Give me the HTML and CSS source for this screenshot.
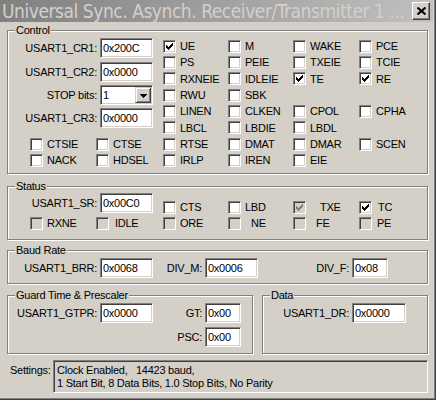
FILE: index.html
```html
<!DOCTYPE html>
<html>
<head>
<meta charset="utf-8">
<link rel="stylesheet" href="styles.css">
</head>
<body>
<div class="window">
  <div class="titlebar">
    <span class="title">Universal Sync. Asynch. Receiver/Transmitter 1 ...</span>
    <span class="close"><svg viewBox="0 0 9 8" width="9" height="8"><path d="M0.5 0.5L8.5 7.5M8.5 0.5L0.5 7.5" stroke="#000" stroke-width="2"/></svg></span>
  </div>
  <div class="client">
    <div class="group control">
      <span class="gt">Control</span>
      <div class="grid cgrid">
        <div class="fields">
          <div class="field"><span class="lab">USART1_CR1:</span><span class="edit">0x200C</span></div>
          <div class="field f2"><span class="lab">USART1_CR2:</span><span class="edit">0x0000</span></div>
          <div class="field f3"><span class="lab">STOP bits:</span><span class="combo"><span class="ctext">1</span><span class="drop"><svg viewBox="0 0 7 4" width="7" height="4"><path d="M0 0h7v1H0zM1 1h5v1H1zM2 2h3v1H2zM3 3h1v1H3z"/></svg></span></span></div>
          <div class="field f4"><span class="lab">USART1_CR3:</span><span class="edit">0x0000</span></div>
        </div>
        <label class="cb"><span class="box"><svg viewBox="1 1 11 11" width="11" height="11"><path d="M3 5h1v3H3zM4 6h1v3H4zM5 7h1v3H5zM6 6h1v3H6zM7 5h1v3H7zM8 4h1v3H8zM9 3h1v3H9z"/></svg></span>UE</label>
        <label class="cb"><span class="box"></span>M</label>
        <label class="cb"><span class="box"></span>WAKE</label>
        <label class="cb"><span class="box"></span>PCE</label>

        <label class="cb"><span class="box"></span>PS</label>
        <label class="cb"><span class="box"></span>PEIE</label>
        <label class="cb"><span class="box"></span>TXEIE</label>
        <label class="cb"><span class="box"></span>TCIE</label>

        <label class="cb"><span class="box"></span>RXNEIE</label>
        <label class="cb"><span class="box"></span>IDLEIE</label>
        <label class="cb"><span class="box"><svg viewBox="1 1 11 11" width="11" height="11"><path d="M3 5h1v3H3zM4 6h1v3H4zM5 7h1v3H5zM6 6h1v3H6zM7 5h1v3H7zM8 4h1v3H8zM9 3h1v3H9z"/></svg></span>TE</label>
        <label class="cb"><span class="box"><svg viewBox="1 1 11 11" width="11" height="11"><path d="M3 5h1v3H3zM4 6h1v3H4zM5 7h1v3H5zM6 6h1v3H6zM7 5h1v3H7zM8 4h1v3H8zM9 3h1v3H9z"/></svg></span>RE</label>

        <label class="cb"><span class="box"></span>RWU</label>
        <label class="cb"><span class="box"></span>SBK</label>
        <span></span><span></span>

        <label class="cb"><span class="box"></span>LINEN</label>
        <label class="cb"><span class="box"></span>CLKEN</label>
        <label class="cb"><span class="box"></span>CPOL</label>
        <label class="cb"><span class="box"></span>CPHA</label>

        <label class="cb"><span class="box"></span>LBCL</label>
        <label class="cb"><span class="box"></span>LBDIE</label>
        <label class="cb"><span class="box"></span>LBDL</label>
        <span></span>

        <span></span>
        <label class="cb"><span class="box"></span>CTSIE</label>
        <label class="cb"><span class="box"></span>CTSE</label>
        <label class="cb"><span class="box"></span>RTSE</label>
        <label class="cb"><span class="box"></span>DMAT</label>
        <label class="cb"><span class="box"></span>DMAR</label>
        <label class="cb"><span class="box"></span>SCEN</label>

        <span></span>
        <label class="cb"><span class="box"></span>NACK</label>
        <label class="cb"><span class="box"></span>HDSEL</label>
        <label class="cb"><span class="box"></span>IRLP</label>
        <label class="cb"><span class="box"></span>IREN</label>
        <label class="cb"><span class="box"></span>EIE</label>
      </div>
    </div>

    <div class="group status">
      <span class="gt">Status</span>
      <div class="grid sgrid">
        <div class="fields"><div class="field"><span class="lab">USART1_SR:</span><span class="edit">0x00C0</span></div></div>
        <label class="cb top"><span class="box"></span>CTS</label>
        <label class="cb top"><span class="box"></span>LBD</label>
        <label class="cb top"><span class="box dis"><svg viewBox="1 1 11 11" width="11" height="11"><path d="M3 5h1v3H3zM4 6h1v3H4zM5 7h1v3H5zM6 6h1v3H6zM7 5h1v3H7zM8 4h1v3H8zM9 3h1v3H9z"/></svg></span><span class="i10">TXE</span></label>
        <label class="cb top"><span class="box"><svg viewBox="1 1 11 11" width="11" height="11"><path d="M3 5h1v3H3zM4 6h1v3H4zM5 7h1v3H5zM6 6h1v3H6zM7 5h1v3H7zM8 4h1v3H8zM9 3h1v3H9z"/></svg></span><span class="i2">TC</span></label>

        <span></span>
        <label class="cb"><span class="box dis"></span>RXNE</label>
        <label class="cb"><span class="box dis"></span><span class="i2">IDLE</span></label>
        <label class="cb"><span class="box dis"></span>ORE</label>
        <label class="cb"><span class="box dis"></span><span class="i6">NE</span></label>
        <label class="cb"><span class="box dis"></span><span class="i6">FE</span></label>
        <label class="cb"><span class="box dis"></span><span class="i1">PE</span></label>
      </div>
    </div>

    <div class="group baud">
      <span class="gt">Baud Rate</span>
      <span class="lab w92">USART1_BRR:</span><span class="edit">0x0068</span>
      <span class="lab w52">DIV_M:</span><span class="edit">0x0006</span>
      <span class="lab w94">DIV_F:</span><span class="edit w36">0x08</span>
    </div>

    <div class="row2">
      <div class="group guard">
        <span class="gt">Guard Time &amp; Prescaler</span>
        <span class="lab w92">USART1_GTPR:</span><span class="edit">0x0000</span>
        <span class="lab w52">GT:</span><span class="edit w36">0x00</span>
        <span class="lab w52 c3">PSC:</span><span class="edit w36 c4">0x00</span>
      </div>
      <div class="group data">
        <span class="gt">Data</span>
        <span class="lab w89">USART1_DR:</span><span class="edit w54">0x0000</span>
      </div>
    </div>

    <div class="settings">
      <span class="slab">Settings:</span>
      <div class="sbox">Clock Enabled,   14423 baud,
1 Start Bit, 8 Data Bits, 1.0 Stop Bits, No Parity</div>
    </div>
  </div>
</div>
</body>
</html>
```
FILE: styles.css
```css
* { box-sizing: border-box; }
html, body { margin: 0; padding: 0; }
body {
  width: 436px;
  height: 400px;
  background: #d4d0c8;
  font-family: "Liberation Sans", Arial, sans-serif;
  font-size: 11px;
  letter-spacing: -0.25px;
  color: #000;
  overflow: hidden;
}
.window {
  width: 436px;
  height: 400px;
  border-right: 1px solid #404040;
  border-bottom: 1px solid #404040;
  box-shadow: inset -1px -1px 0 #808080;
  display: flex;
  flex-direction: column;
}
.titlebar {
  height: 22px;
  margin-right: 2px;
  background: linear-gradient(to right, #808080, #c0c0c0);
  display: flex;
  align-items: center;
  justify-content: space-between;
  padding: 0 3px 0 2px;
  overflow: hidden;
}
.title {
  color: #d4d0c8;
  font-family: "DejaVu Sans Condensed", "DejaVu Sans", sans-serif;
  font-stretch: condensed;
  font-size: 19px;
  letter-spacing: -0.45px;
  line-height: 22px;
  white-space: nowrap;
  overflow: hidden;
}
.close {
  flex: none;
  width: 18px;
  height: 18px;
  background: #d4d0c8;
  border: 1px solid;
  border-color: #fff #404040 #404040 #fff;
  box-shadow: inset -1px -1px 0 #808080;
  display: flex;
  align-items: center;
  justify-content: center;
}
.close svg { display: block; }
.client {
  padding: 8px 7px 0 7px;
  display: flex;
  flex-direction: column;
}
.group {
  position: relative;
  border: 1px solid #808080;
  box-shadow: inset 1px 1px 0 #fff, 1px 1px 0 #fff;
}
.gt {
  position: absolute;
  top: -7px;
  left: 7px;
  padding: 0 1px;
  background: #d4d0c8;
  line-height: 13px;
  white-space: nowrap;
}
.grid {
  display: grid;
  grid-template-columns: 22px 66px 67px 65px 65px 66px 1fr;
}
.control { height: 144px; padding-top: 7px; }
.cgrid { grid-auto-rows: 16.33px; }
.status { height: 54px; padding-top: 6px; margin-top: 12px; }
.sgrid { grid-template-rows: 22px 16px; }
.fields {
  grid-column: 1 / 4;
  grid-row: 1 / 7;
  display: flex;
  flex-direction: column;
}
.sgrid .fields { grid-row: 1; }
.field { display: flex; align-items: center; height: 20px; }
.f2 { margin-top: 4px; }
.f3 { margin-top: 3px; }
.f4 { margin-top: 3px; }
.lab {
  flex: none;
  width: 92px;
  padding-right: 3px;
  text-align: right;
  white-space: nowrap;
  line-height: 20px;
}
.w92 { width: 92px; }
.w52 { width: 52px; }
.w94 { width: 94px; }
.w89 { width: 89px; }
.edit {
  flex: none;
  display: block;
  width: 53px;
  height: 20px;
  border: 1px solid;
  border-color: #808080 #fff #fff #808080;
  box-shadow: inset 1px 1px 0 #404040, inset -1px -1px 0 #d4d0c8;
  background: #fff;
  padding-left: 2px;
  line-height: 18px;
  white-space: nowrap;
}
.w36 { width: 36px; }
.w54 { width: 54px; }
.combo {
  flex: none;
  width: 53px;
  height: 20px;
  border: 1px solid;
  border-color: #808080 #fff #fff #808080;
  box-shadow: inset 1px 1px 0 #404040, inset -1px -1px 0 #d4d0c8;
  background: #fff;
  padding: 1px;
  display: flex;
  align-items: center;
}
.ctext { flex: 1; padding-left: 1px; line-height: 16px; }
.drop {
  flex: none;
  width: 16px;
  height: 16px;
  background: #d4d0c8;
  border: 1px solid;
  border-color: #d4d0c8 #404040 #404040 #d4d0c8;
  box-shadow: inset 1px 1px 0 #fff, inset -1px -1px 0 #808080;
  display: flex;
  align-items: center;
  justify-content: center;
}
.drop svg { display: block; margin-top: 1px; }
.cb {
  display: flex;
  align-items: center;
  white-space: nowrap;
  height: 16px;
}
.cgrid .cb { height: 16.33px; }
.cb.top { align-self: end; }
.box {
  flex: none;
  width: 13px;
  height: 13px;
  margin-right: 4px;
  border: 1px solid;
  border-color: #808080 #fff #fff #808080;
  box-shadow: inset 1px 1px 0 #404040, inset -1px -1px 0 #d4d0c8;
  background: #fff;
}
.box svg { display: block; fill: #000; }
.box.dis { background: #d4d0c8; }
.box.dis svg { fill: #808080; }
.i1 { padding-left: 1px; }
.i2 { padding-left: 2px; }
.i6 { padding-left: 6px; }
.i10 { padding-left: 10px; }
.baud {
  height: 34px;
  margin-top: 10px;
  padding-top: 7px;
  display: flex;
  align-items: flex-start;
}
.row2 {
  display: flex;
  gap: 9px;
  margin-top: 11px;
}
.guard {
  width: 246px;
  height: 59px;
  padding-top: 7px;
  display: grid;
  grid-template-columns: 92px 53px 52px 36px;
  grid-template-rows: 20px 20px;
  row-gap: 4px;
  align-content: start;
}
.c3 { grid-column: 3; }
.c4 { grid-column: 4; }
.data {
  flex: 1;
  height: 59px;
  padding-top: 7px;
  display: flex;
  align-items: flex-start;
}
.settings {
  display: flex;
  margin-top: 6px;
}
.slab {
  flex: none;
  width: 46px;
  padding-left: 3px;
  padding-top: 4px;
  line-height: 13px;
}
.sbox {
  width: 376px;
  height: 33px;
  border: 1px solid;
  border-color: #808080 #fff #fff #808080;
  box-shadow: inset 1px 1px 0 #404040, inset -1px -1px 0 #d4d0c8;
  background: #d4d0c8;
  padding: 3px 2px 0 3px;
  line-height: 13px;
  white-space: pre;
}
```
